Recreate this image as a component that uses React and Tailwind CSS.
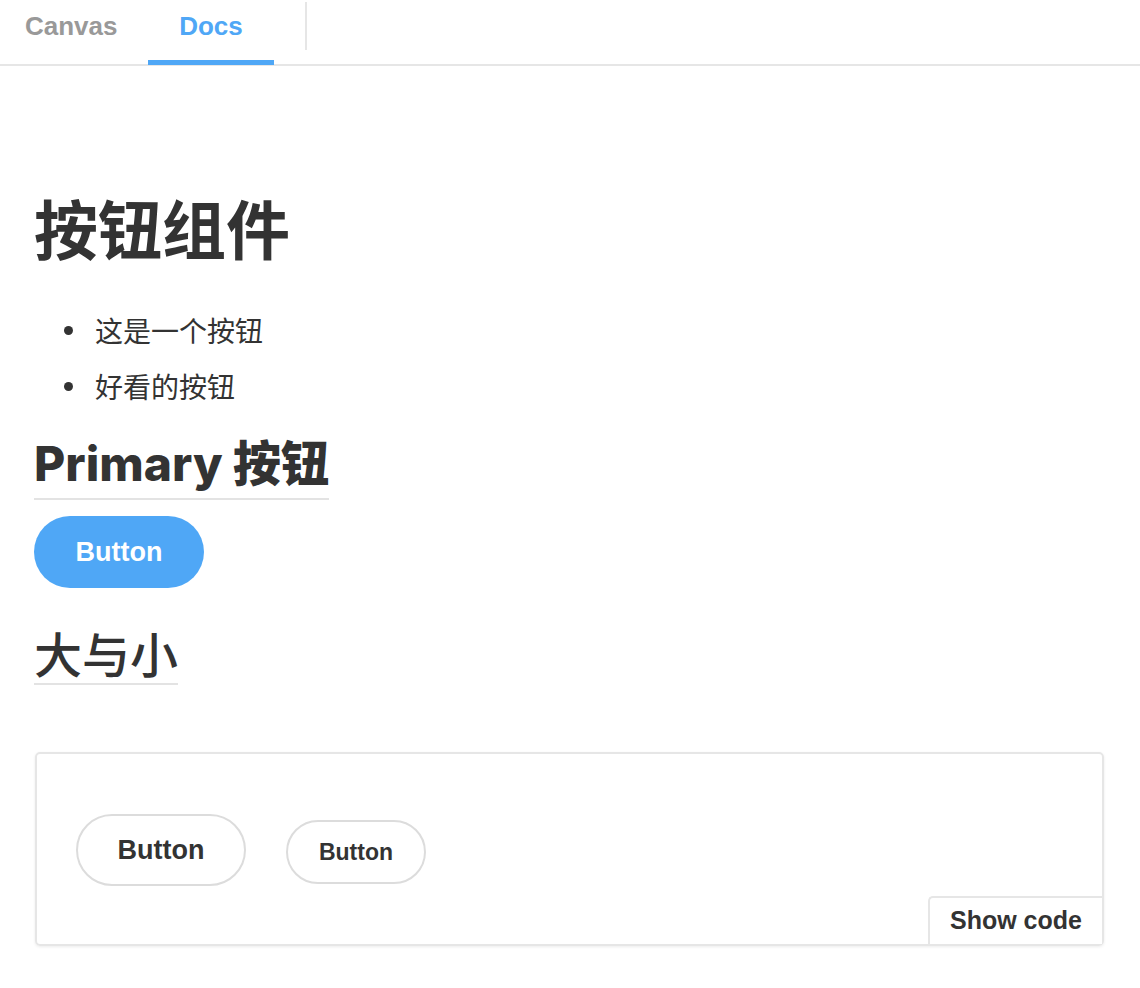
import React from "react";

const UI = "font-['Liberation_Sans','Noto_Sans_CJK_SC',sans-serif]";
const HEAD = "font-['Inter','Noto_Sans_CJK_SC',sans-serif]";
const CJK = "font-['Noto_Sans_CJK_SC',sans-serif]";

function Tabs() {
  return (
    <div className={`flex h-[66px] items-stretch border-b-2 border-[#e6e6e6] ${UI}`}>
      <div className="flex w-[148px] items-center pb-[11px] pl-[25px] text-[26px] font-bold text-[#999999]">
        Canvas
      </div>
      <div className="relative flex w-[126px] items-center justify-center pb-[11px] text-[26px] font-bold text-[#4fa7f6]">
        Docs
        <span className="absolute bottom-[-1px] left-0 right-0 h-[5px] bg-[#4fa7f6]" />
      </div>
      <div className="ml-[31px] mt-[2px] h-[48px] w-[2px] bg-[#e6e6e6]" />
    </div>
  );
}

function Pill({ size, children }) {
  if (size === "lg") {
    return (
      <button className="h-[72px] w-[170px] rounded-full border-2 border-[#dcdcdc] bg-white text-[27px] font-bold text-[#333333]">
        {children}
      </button>
    );
  }
  return (
    <button className="mt-[4px] h-[64px] w-[140px] rounded-full border-2 border-[#dcdcdc] bg-white text-[23px] font-bold text-[#333333]">
      {children}
    </button>
  );
}

export default function App() {
  return (
    <div className={`min-h-[988px] w-[1140px] bg-white text-[#333333] ${CJK}`}>
      <Tabs />
      <div className="px-[34px]">
        <h1 className="mt-[123px] text-[64px] font-bold leading-[74px]">
          按钮组件
        </h1>
        <ul className="mt-[51px] flex flex-col gap-[24px] pl-[30px]">
          {["这是一个按钮", "好看的按钮"].map((t) => (
            <li key={t} className="flex items-center gap-[22px] text-[28px] leading-[32px]">
              <span className="h-[9px] w-[9px] rounded-full bg-[#333333]" />
              {t}
            </li>
          ))}
        </ul>
        <h2
          className={`mt-[34px] inline-block border-b-2 border-[#e3e3e3] pb-[6px] text-[48px] font-extrabold leading-[56px] ${HEAD}`}
        >
          Primary 按钮
        </h2>
        <div className={`mt-[16px] ${UI}`}>
          <button className="h-[72px] w-[170px] rounded-full bg-[#4fa7f6] text-[27px] font-bold text-white">
            Button
          </button>
        </div>
        <h2 className="mt-[36px] inline-block border-b-2 border-[#e3e3e3] pb-[3px] text-[48px] font-medium leading-[56px]">
          大与小
        </h2>
        <div
          className={`relative mt-[67px] ml-[1px] flex h-[194px] w-[1069px] items-center gap-[40px] rounded-[5px] border-2 border-[#e6e6e6] pl-[39px] pt-[2px] shadow-[0_1px_3px_rgba(0,0,0,0.08)] ${UI}`}
        >
          <Pill size="lg">Button</Pill>
          <Pill size="sm">Button</Pill>
          <div className="absolute bottom-0 right-0 flex h-[48px] w-[174px] items-center justify-center rounded-tl-[5px] border-l-2 border-t-2 border-[#e6e6e6] bg-white text-[25px] font-bold">
            Show code
          </div>
        </div>
      </div>
    </div>
  );
}
